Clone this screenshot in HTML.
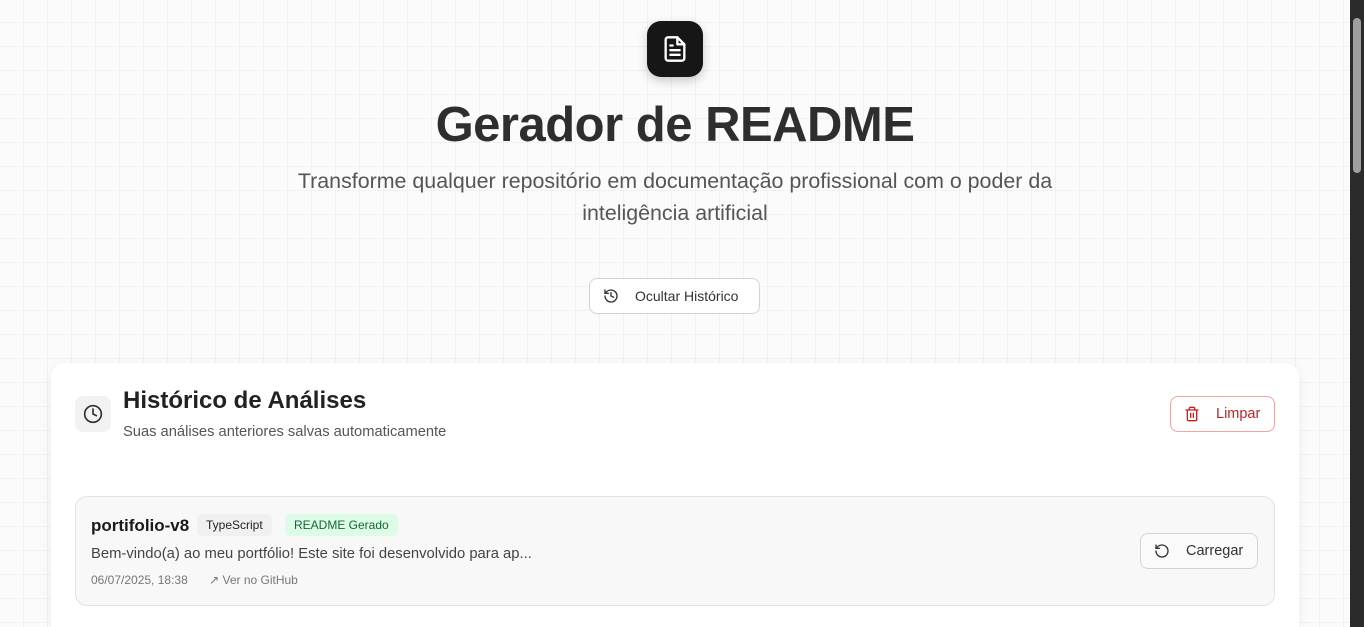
<!DOCTYPE html>
<html><head><meta charset="utf-8"><style>
*{box-sizing:border-box;margin:0;padding:0}
html{width:1364px;height:627px;overflow:hidden}
body{width:1364px;height:627px;overflow:hidden;font-family:"Liberation Sans",sans-serif;background:#fbfbfb;position:relative;color:#222}
.grid{position:absolute;left:0;top:0;width:1350px;height:627px;background-image:linear-gradient(#f1f1f1 1px,transparent 1px),linear-gradient(90deg,#f1f1f1 1px,transparent 1px);background-size:24px 24px;background-position:23px 22px}
.sb{position:absolute;right:0;top:0;width:14px;height:627px;background:#2b2b2b}
.sb .t{position:absolute;left:3px;top:18px;width:8px;height:155px;background:#9f9f9f;border-radius:4px}
.logo{position:absolute;left:647px;top:21px;width:56px;height:56px;background:#161616;border-radius:14px;box-shadow:0 4px 10px rgba(0,0,0,.2);display:flex;align-items:center;justify-content:center}
h1{position:absolute;left:0;width:1350px;top:97px;text-align:center;font-size:49px;font-weight:bold;color:#2e2e2e;letter-spacing:-0.5px}
.sub{position:absolute;left:0;width:1350px;top:165px;text-align:center;font-size:21.4px;line-height:32px;color:#555}
.btn{position:absolute;background:#fff;border:1px solid #d4d4d4;border-radius:8px;display:flex;align-items:center;font-size:14px;color:#333}
.card{position:absolute;left:51px;top:363px;width:1248px;height:264px;background:#fff;border-radius:14px 14px 0 0;box-shadow:0 2px 12px rgba(0,0,0,.06)}
.item{position:absolute;left:24px;top:133px;width:1200px;height:110px;background:#f8f8f8;border:1px solid #e2e2e2;border-radius:12px}
</style></head><body>
<div class="grid"></div>
<div class="logo"><svg width="28" height="28" viewBox="0 0 24 24" fill="none" stroke="#fff" stroke-width="2" stroke-linecap="round" stroke-linejoin="round"><path d="M14 2H6a2 2 0 0 0-2 2v16a2 2 0 0 0 2 2h12a2 2 0 0 0 2-2V8z"/><path d="M14 2v6h6"/><path d="M16 13H8M16 17H8M10 9H8"/></svg></div>
<h1>Gerador de README</h1>
<div class="sub">Transforme qualquer repositório em documentação profissional com o poder da<br>inteligência artificial</div>
<div class="btn" style="left:589px;top:278px;width:171px;height:36px;padding-left:13px"><svg width="16" height="16" viewBox="0 0 24 24" fill="none" stroke="#333" stroke-width="2" stroke-linecap="round"><path d="M3 12a9 9 0 1 0 9-9 9.75 9.75 0 0 0-6.74 2.74L3 8"/><path d="M3 3v5h5"/><path d="M12 7v5l4 2"/></svg><span style="margin-left:16px">Ocultar Histórico</span></div>
<div class="card">
 <div style="position:absolute;left:24px;top:33px;width:36px;height:36px;background:#f2f2f2;border-radius:8px;display:flex;align-items:center;justify-content:center"><svg width="20" height="20" viewBox="0 0 24 24" fill="none" stroke="#333" stroke-width="2" stroke-linecap="round"><circle cx="12" cy="12" r="10"/><path d="M12 6v6l4 2"/></svg></div>
 <div style="position:absolute;left:72px;top:24px;font-size:24px;font-weight:bold;color:#222">Histórico de Análises</div>
 <div style="position:absolute;left:72px;top:61px;font-size:14.7px;color:#555">Suas análises anteriores salvas automaticamente</div>
 <div class="btn" style="left:1119px;top:33px;width:105px;height:36px;border-color:#f5a3a3;color:#c81e1e;padding-left:13px"><svg width="16" height="16" viewBox="0 0 24 24" fill="none" stroke="#c81e1e" stroke-width="2" stroke-linecap="round"><path d="M3 6h18M19 6v14a2 2 0 0 1-2 2H7a2 2 0 0 1-2-2V6M8 6V4a2 2 0 0 1 2-2h4a2 2 0 0 1 2 2v2M10 11v6M14 11v6"/></svg><span style="margin-left:16px;font-size:14.5px">Limpar</span></div>
 <div class="item">
  <div style="position:absolute;left:15px;top:19px;font-size:17px;font-weight:bold;color:#1a1a1a">portifolio-v8</div>
  <div style="position:absolute;left:121px;top:17px;height:22px;padding:0 9px;background:#f0f0f0;border-radius:6px;font-size:12px;line-height:22px;color:#222">TypeScript</div>
  <div style="position:absolute;left:209px;top:17px;height:22px;padding:0 9px;background:#dcfce7;border-radius:6px;font-size:12px;line-height:22px;color:#166534">README Gerado</div>
  <div style="position:absolute;left:15px;top:49px;font-size:14.8px;color:#444">Bem-vindo(a) ao meu portfólio! Este site foi desenvolvido para ap...</div>
  <div style="position:absolute;left:15px;top:76px;font-size:12px;color:#777">06/07/2025, 18:38 <span style="margin-left:18px">↗ Ver no GitHub</span></div>
  <div class="btn" style="left:1064px;top:36px;width:118px;height:36px;padding-left:13px;background:#fafafa"><svg width="16" height="16" viewBox="0 0 24 24" fill="none" stroke="#333" stroke-width="2" stroke-linecap="round"><path d="M3 12a9 9 0 1 0 9-9 9.75 9.75 0 0 0-6.74 2.74L3 8"/><path d="M3 3v5h5"/></svg><span style="margin-left:16px;font-size:14.5px">Carregar</span></div>
 </div>
</div>
<div class="sb"><div class="t"></div></div>
</body></html>
